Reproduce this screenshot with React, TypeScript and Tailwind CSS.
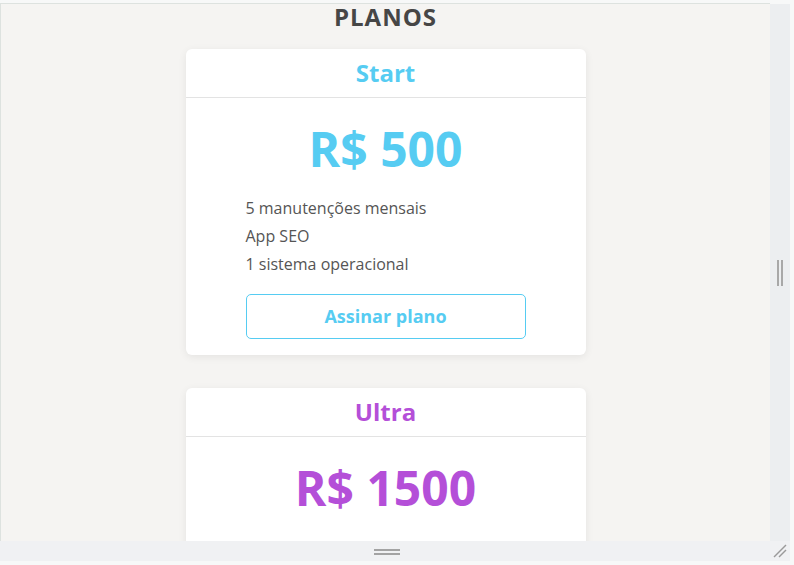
const plans = [
  {
    id: 1,
    title: "Start",
    price: "R$ 500",
    color: "text-[#56ccf2]",
    border: "border-[#56ccf2]",
    items: ["5 manutenções mensais", "App SEO", "1 sistema operacional"],
  },
  {
    id: 2,
    title: "Ultra",
    price: "R$ 1500",
    color: "text-[#b44fd8]",
    border: "border-[#b44fd8]",
    items: ["Manutenções ilimitadas", "App SEO", "3 sistemas operacionais"],
  },
];

const PlanCard = ({ plan }: { plan: (typeof plans)[number] }) => (
  <div className="w-[400px] mx-auto bg-white rounded-[6px] shadow-[0_2px_8px_rgba(0,0,0,0.07)] shrink-0">
    <div className="h-[49px] flex items-center justify-center border-b border-[#e3e3e3]">
      <h3 className={`text-[24px] leading-6 font-bold ${plan.color}`}>{plan.title}</h3>
    </div>
    <div className="pt-[23px] pb-[16px] flex flex-col items-center">
      <p className={`text-[48px] leading-[56px] font-bold ${plan.color}`}>{plan.price}</p>
      <ul className="w-[280px] mt-[17px] text-[16px] leading-7 text-[#555555]">
        {plan.items.map((item) => (
          <li key={item}>{item}</li>
        ))}
      </ul>
      <button
        className={`mt-[16px] w-[280px] h-[45px] border ${plan.border} rounded-[5px] bg-white text-[18px] font-bold ${plan.color}`}
      >
        Assinar plano
      </button>
    </div>
  </div>
);

export default function App() {
  return (
    <div className="w-[794px] h-[565px] bg-[#f7f8f8] overflow-hidden font-['Open_Sans',sans-serif]">
      <div className="flex h-[541px] pt-[3px]">
        <div className="w-[770px] border-t border-l border-[#dde2df] bg-[#f5f4f2] overflow-hidden flex flex-col">
          <h2 className="text-center text-[24px] leading-[26px] font-bold tracking-[1px] text-[#464646]">PLANOS</h2>
          <div className="mt-[19px] flex flex-col gap-[33px]">
            {plans.map((plan) => (
              <PlanCard key={plan.id} plan={plan} />
            ))}
          </div>
        </div>
        <div className="w-[20px] mt-px bg-[#eceef0] flex items-center justify-center gap-[2px]">
          <span className="w-[2px] h-[26px] bg-[#a8a8a8]" />
          <span className="w-[2px] h-[26px] bg-[#a8a8a8]" />
        </div>
      </div>
      <div className="relative w-[790px] h-[20px] bg-[#f0f1f3] flex flex-col justify-center pl-[374px] gap-[2px] pt-[2px]">
        <span className="w-[26px] h-[2px] bg-[#a3a3a3]" />
        <span className="w-[26px] h-[2px] bg-[#a3a3a3]" />
        <svg className="absolute right-[2px] top-[3px]" width="15" height="15" viewBox="0 0 15 15">
          <line x1="1" y1="13" x2="13" y2="1" stroke="#9a9a9a" strokeWidth="1.5" />
          <line x1="6" y1="13" x2="13" y2="6" stroke="#9a9a9a" strokeWidth="1.5" />
        </svg>
      </div>
    </div>
  );
}
